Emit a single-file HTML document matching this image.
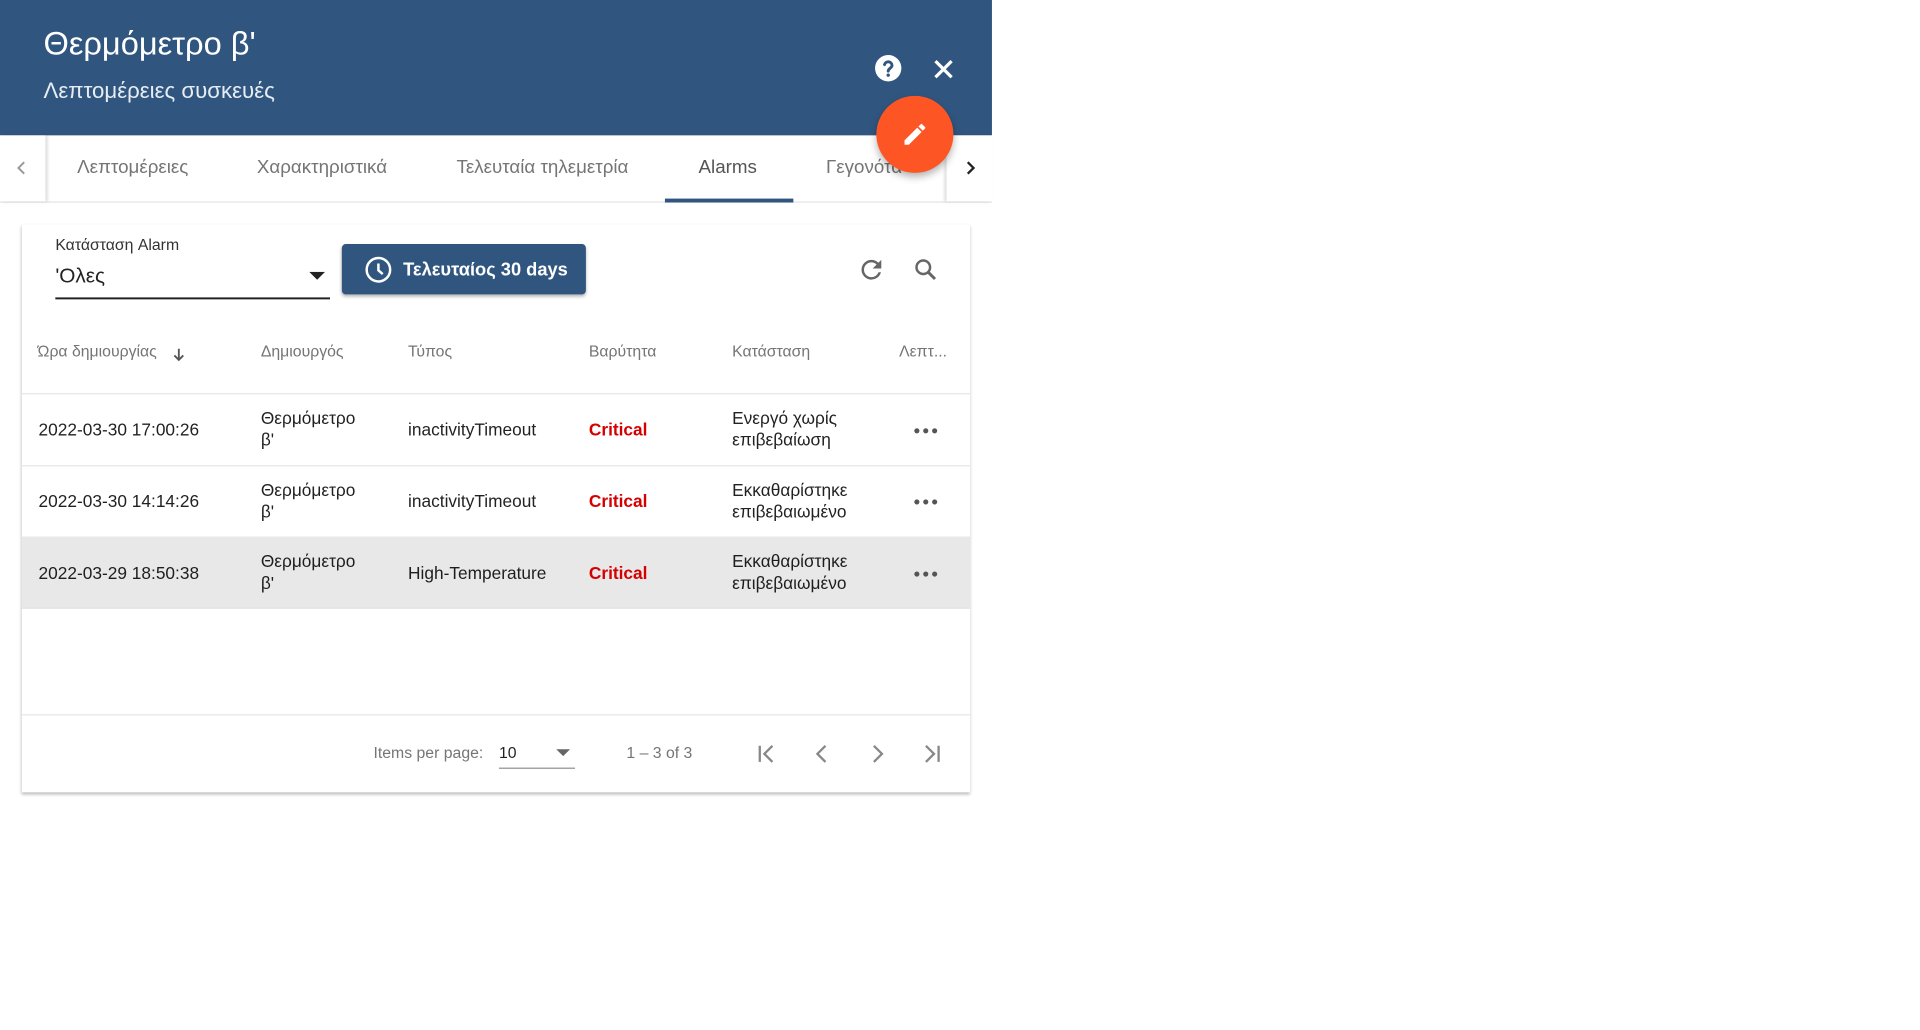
<!DOCTYPE html>
<html><head><meta charset="utf-8"><style>
*{box-sizing:border-box;margin:0;padding:0}
body{width:1920px;height:1030px;background:#fff;font-family:"Liberation Sans",sans-serif;position:relative;overflow:hidden;color:rgba(0,0,0,.87)}
#w{position:absolute;left:0;top:0;width:1920px;height:1030px;transform:scale(0.988);transform-origin:0 0}
.a{position:absolute;white-space:nowrap}
.hdr{position:absolute;left:0;top:0;width:1004px;height:137px;background:#305680}
.th{font-size:16px;color:#757575}
.td{font-size:17.5px;line-height:22px}
.crit{color:#d50000;font-weight:bold;font-size:17.5px}
</style></head><body><div id="w">
<div class="hdr"></div>
<div class="a" style="left:44px;top:25px;font-size:33px;color:#fff">Θερμόμετρο β'</div>
<div class="a" style="left:44px;top:79px;font-size:22.5px;color:#e8edf3">Λεπτομέρειες συσκευές</div>
<svg class="a" style="left:883px;top:53px" width="32" height="32" viewBox="0 0 24 24"><circle cx="12" cy="12" r="10" fill="#fff"/><path d="M9.2 9.3a2.9 2.9 0 0 1 5.7.6c0 2-2.9 2.3-2.9 4.3" stroke="#305680" stroke-width="2.2" fill="none" stroke-linecap="round"/><circle cx="12" cy="17.3" r="1.3" fill="#305680"/></svg>
<svg class="a" style="left:941px;top:56px" width="28" height="28" viewBox="0 0 24 24"><path d="M5 5L19 19M19 5L5 19" stroke="#fff" stroke-width="2.8"/></svg>
<div class="a" style="left:0;top:137px;width:1004px;height:68px;border-bottom:1px solid #ddd"></div>
<div class="a" style="left:0;top:137px;width:46px;height:67px;box-shadow:2px 0 3px rgba(0,0,0,.15);background:#fff"></div>
<div class="a" style="left:958px;top:137px;width:46px;height:67px;box-shadow:-2px 0 3px rgba(0,0,0,.15);background:#fff"></div>
<svg class="a" style="left:12px;top:160px" width="20" height="20" viewBox="0 0 24 24"><path d="M15 5l-7 7 7 7" stroke="#999" stroke-width="2.4" fill="none"/></svg>
<svg class="a" style="left:972px;top:160px" width="20" height="20" viewBox="0 0 24 24"><path d="M9 5l7 7-7 7" stroke="#222" stroke-width="2.8" fill="none"/></svg>
<div class="a" style="left:78px;top:159px;font-size:19px;color:#757575">Λεπτομέρειες</div>
<div class="a" style="left:260px;top:159px;font-size:19px;color:#757575">Χαρακτηριστικά</div>
<div class="a" style="left:462px;top:159px;font-size:19px;color:#757575">Τελευταία τηλεμετρία</div>
<div class="a" style="left:707px;top:159px;font-size:19px;color:#555">Alarms</div>
<div class="a" style="left:836px;top:159px;font-size:19px;color:#757575;width:120px;overflow:hidden">Γεγονότα</div>
<div class="a" style="left:673px;top:201px;width:130px;height:4px;background:#305680"></div>
<div class="a" style="left:887px;top:97px;width:78px;height:78px;border-radius:50%;background:#fd5624;box-shadow:0 4px 8px rgba(0,0,0,.3)"></div>
<svg class="a" style="left:912px;top:122px" width="28" height="28" viewBox="0 0 24 24"><path d="M3 17.25V21h3.75L17.81 9.94l-3.75-3.75L3 17.25zM20.71 7.04a1 1 0 0 0 0-1.41l-2.34-2.340a1 1 0 0 0-1.41 0l-1.83 1.83 3.75 3.75 1.83-1.830z" fill="#fff"/></svg>
<div class="a" style="left:22px;top:227px;width:960px;height:575px;background:#fff;box-shadow:0 2px 3px rgba(0,0,0,.25),0 0 2px rgba(0,0,0,.08)"></div>
<div class="a" style="left:56px;top:240px;font-size:16px;color:#333">Κατάσταση Alarm</div>
<div class="a" style="left:56px;top:268px;font-size:21px;color:#222">'Ολες</div>
<div class="a" style="left:56px;top:301px;width:278px;height:2px;background:#222"></div>
<svg class="a" style="left:313px;top:275px" width="16" height="10" viewBox="0 0 10 6"><path d="M0 0h10L5 5z" fill="#222"/></svg>
<div class="a" style="left:346px;top:247px;width:247px;height:51px;background:#305680;border-radius:4px;box-shadow:0 2px 3px rgba(0,0,0,.3)"></div>
<svg class="a" style="left:368px;top:258px" width="30" height="30" viewBox="0 0 24 24"><circle cx="12" cy="12" r="9.5" stroke="#fff" stroke-width="2" fill="none"/><path d="M12 7v5.5l3.5 3" stroke="#fff" stroke-width="2" fill="none"/></svg>
<div class="a" style="left:408px;top:262px;font-size:18.5px;color:#fff;font-weight:bold">Τελευταίος 30 days</div>
<svg class="a" style="left:867px;top:258px" width="30" height="30" viewBox="0 0 24 24"><path d="M17.65 6.35A7.95 7.95 0 0 0 12 4a8 8 0 1 0 7.73 10h-2.08A6 6 0 1 1 12 6c1.66 0 3.14.69 4.22 1.78L13 11h7V4l-2.35 2.35z" fill="#666"/></svg>
<svg class="a" style="left:922px;top:258px" width="30" height="30" viewBox="0 0 24 24"><circle cx="10" cy="10" r="5.5" stroke="#666" stroke-width="2" fill="none"/><path d="M14 14l5.5 5.5" stroke="#666" stroke-width="2.4"/></svg>
<div class="a th" style="left:38px;top:348px">Ώρα δημιουργίας</div>
<svg class="a" style="left:172px;top:350px" width="18" height="18" viewBox="0 0 24 24"><path d="M12 4v15M6 13l6 6 6-6" stroke="#555" stroke-width="2.5" fill="none"/></svg>
<div class="a th" style="left:264px;top:348px">Δημιουργός</div>
<div class="a th" style="left:413px;top:348px">Τύπος</div>
<div class="a th" style="left:596px;top:348px">Βαρύτητα</div>
<div class="a th" style="left:741px;top:348px">Κατάσταση</div>
<div class="a th" style="left:910px;top:348px">Λεπτ...</div>
<div class="a" style="left:22px;top:398px;width:960px;height:1px;background:#e0e0e0"></div>
<div class="a" style="left:22px;top:471px;width:960px;height:1px;background:#e0e0e0"></div>
<div class="a" style="left:22px;top:543px;width:960px;height:72px;background:#e8e8e8"></div>
<div class="a" style="left:22px;top:615px;width:960px;height:1px;background:#d8d8d8"></div>
<div class="a td" style="left:39px;top:424px">2022-03-30 17:00:26</div>
<div class="a td" style="left:264px;top:412px">Θερμόμετρο<br>β'</div>
<div class="a td" style="left:413px;top:424px">inactivityTimeout</div>
<div class="a crit" style="left:596px;top:425px">Critical</div>
<div class="a td" style="left:741px;top:412px">Ενεργό χωρίς<br>επιβεβαίωση</div>
<div class="a td" style="left:39px;top:496px">2022-03-30 14:14:26</div>
<div class="a td" style="left:264px;top:485px">Θερμόμετρο<br>β'</div>
<div class="a td" style="left:413px;top:496px">inactivityTimeout</div>
<div class="a crit" style="left:596px;top:497px">Critical</div>
<div class="a td" style="left:741px;top:485px">Εκκαθαρίστηκε<br>επιβεβαιωμένο</div>
<div class="a td" style="left:39px;top:569px">2022-03-29 18:50:38</div>
<div class="a td" style="left:264px;top:557px">Θερμόμετρο<br>β'</div>
<div class="a td" style="left:413px;top:569px">High-Temperature</div>
<div class="a crit" style="left:596px;top:570px">Critical</div>
<div class="a td" style="left:741px;top:557px">Εκκαθαρίστηκε<br>επιβεβαιωμένο</div>
<svg class="a" style="left:924px;top:430px" width="26" height="12"><circle cx="4" cy="6" r="2.6" fill="#555"/><circle cx="13" cy="6" r="2.6" fill="#555"/><circle cx="22" cy="6" r="2.6" fill="#555"/></svg>
<svg class="a" style="left:924px;top:502px" width="26" height="12"><circle cx="4" cy="6" r="2.6" fill="#555"/><circle cx="13" cy="6" r="2.6" fill="#555"/><circle cx="22" cy="6" r="2.6" fill="#555"/></svg>
<svg class="a" style="left:924px;top:575px" width="26" height="12"><circle cx="4" cy="6" r="2.6" fill="#555"/><circle cx="13" cy="6" r="2.6" fill="#555"/><circle cx="22" cy="6" r="2.6" fill="#555"/></svg>
<div class="a" style="left:22px;top:723px;width:960px;height:1px;background:#e0e0e0"></div>
<div class="a" style="left:378px;top:754px;font-size:16px;color:#757575">Items per page:</div>
<div class="a" style="left:505px;top:754px;font-size:16px;color:#222">10</div>
<div class="a" style="left:505px;top:777px;width:77px;height:1px;background:#777"></div>
<svg class="a" style="left:563px;top:758px" width="14" height="9" viewBox="0 0 10 6"><path d="M0 0h10L5 5z" fill="#666"/></svg>
<div class="a" style="left:634px;top:754px;font-size:16px;color:#757575">1 – 3 of 3</div>
<svg class="a" style="left:762px;top:749px" width="28" height="28" viewBox="0 0 24 24"><path d="M6 5v14M17 5l-7 7 7 7" stroke="#888" stroke-width="2" fill="none"/></svg>
<svg class="a" style="left:818px;top:749px" width="28" height="28" viewBox="0 0 24 24"><path d="M15 5l-7 7 7 7" stroke="#888" stroke-width="2" fill="none"/></svg>
<svg class="a" style="left:874px;top:749px" width="28" height="28" viewBox="0 0 24 24"><path d="M9 5l7 7-7 7" stroke="#888" stroke-width="2" fill="none"/></svg>
<svg class="a" style="left:929px;top:749px" width="28" height="28" viewBox="0 0 24 24"><path d="M18 5v14M7 5l7 7-7 7" stroke="#888" stroke-width="2" fill="none"/></svg>
</div></body></html>
